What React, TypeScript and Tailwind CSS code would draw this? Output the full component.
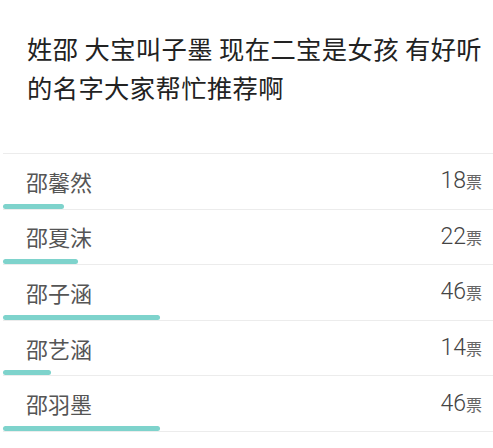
const OPTIONS = [
  { name: "邵馨然", votes: 18 },
  { name: "邵夏沫", votes: 22 },
  { name: "邵子涵", votes: 46 },
  { name: "邵艺涵", votes: 14 },
  { name: "邵羽墨", votes: 46 },
];

const maxVotes = Math.max(...OPTIONS.map((o) => o.votes));

export default function App() {
  return (
    <div
      className="h-[448px] w-[493px] overflow-hidden bg-white"
      style={{ fontFamily: '"Noto Sans CJK SC", "Noto Sans", sans-serif' }}
    >
      <h1 className="pl-[27px] pr-[4px] pt-[29px] pb-[46px] text-[25.3px] font-normal leading-[39px] tracking-[0.4px] text-[#222]">
        姓邵 大宝叫子墨 现在二宝是女孩 有好听的名字大家帮忙推荐啊
      </h1>

      <ul className="ml-[3px] border-t border-[#ececec]">
        {OPTIONS.map((o) => (
          <li key={o.name} className="border-b border-[#ececec]">
            <div className="flex h-[49.6px] items-center justify-between pt-[4px] pl-[23px] pr-[11px]">
              <span className="text-[22px] leading-none text-[#555]">{o.name}</span>
              <span className="flex items-baseline text-[#555]">
                <span className="font-['Roboto',sans-serif] text-[23px] font-light leading-none text-[#444]">
                  {o.votes}
                </span>
                <span className="text-[16px] leading-none text-[#666]">票</span>
              </span>
            </div>
            <div
              className="h-[5px] rounded-full bg-[#7ed3cc]"
              style={{ width: `${(o.votes / maxVotes) * 32}%` }}
            />
          </li>
        ))}
      </ul>
    </div>
  );
}
